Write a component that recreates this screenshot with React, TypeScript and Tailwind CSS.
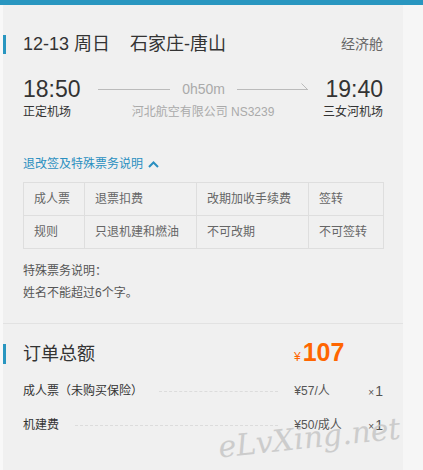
import React from 'react';

const rules = [
  ['成人票', '退票扣费', '改期加收手续费', '签转'],
  ['规则', '只退机建和燃油', '不可改期', '不可签转'],
];

const fees = [
  { name: '成人票（未购买保险）', price: '¥57/人', qty: '1' },
  { name: '机建费', price: '¥50/成人', qty: '1' },
];

export default function App() {
  return (
    <div className="relative h-[470px] w-[423px] overflow-hidden bg-[#f6f6f6] font-['Liberation_Sans','Noto_Sans_CJK_SC',sans-serif] text-[#333]">
      <div className="h-[5px] bg-[#2996c0]" />
      <div className="flex h-[465px]">
        <div className="w-[3px] shrink-0 bg-[#f8f8f8]" />
        <div className="w-[400px] shrink-0 bg-[#f0f0f0]">
          {/* flight */}
          <div className="pt-[30px]">
            <div className="flex h-[19px] items-center border-l-[3px] border-[#2996c0] pl-[17px] pr-[20px]">
              <span className="text-[18px] leading-[19px]">12-13</span>
              <span className="ml-[5px] text-[18px] leading-[19px]">周日</span>
              <span className="ml-[20px] text-[18px] leading-[19px]">石家庄-唐山</span>
              <span className="ml-auto text-[14px] leading-[19px] text-[#666]">经济舱</span>
            </div>

            <div className="mt-[23px] flex px-[20px]">
              <div className="w-[75px]">
                <div className="text-[23px] leading-[24px]">18:50</div>
                <div className="mt-[3px] text-[12px] leading-[16px]">正定机场</div>
              </div>
              <div className="flex-1">
                <div className="flex h-[24px] items-center">
                  <div className="h-px flex-1 bg-[#bbb]" />
                  <span className="mx-[12px] text-[14px] text-[#aaa]">0h50m</span>
                  <svg width="71" height="7" viewBox="0 0 71 7" className="shrink-0 translate-y-[-3px]">
                    <path d="M0 6.5H71M64.5 0.5L70.5 6.5" stroke="#bbb" strokeWidth="1" fill="none" />
                  </svg>
                </div>
                <div className="mt-[3px] text-center text-[12px] leading-[16px] text-[#aaa]">河北航空有限公司 NS3239</div>
              </div>
              <div className="w-[75px] text-right">
                <div className="text-[23px] leading-[24px]">19:40</div>
                <div className="mt-[3px] text-[12px] leading-[16px]">三女河机场</div>
              </div>
            </div>

            {/* rules */}
            <div className="px-[20px]">
              <div className="mt-[36px] flex h-[16px] items-center text-[12px] text-[#2a8fc0]">
                <span>退改签及特殊票务说明</span>
                <svg width="11" height="7" viewBox="0 0 11 7" className="ml-[5px]">
                  <path d="M1 6L5.5 1.5L10 6" stroke="#2a8fc0" strokeWidth="2" fill="none" />
                </svg>
              </div>
              <div className="mt-[10px] grid w-[361px] grid-cols-[61px_112px_112px_75px] border-l border-t border-[#dedede] text-[12px] text-[#666]">
                {rules.flat().map((c, i) => (
                  <div key={i} className="flex h-[33px] items-center border-b border-r border-[#dedede] pl-[10px]">
                    {c}
                  </div>
                ))}
              </div>
              <div className="mt-[11px] pb-[19px] text-[12px] leading-[22px] text-[#555]">
                <div>特殊票务说明：</div>
                <div>姓名不能超过6个字。</div>
              </div>
            </div>
          </div>

          <div className="h-px bg-[#e2e2e2]" />

          {/* total */}
          <div className="pt-[20px]">
            <div className="flex h-[20px] items-center border-l-[3px] border-[#2996c0] pl-[17px]">
              <span className="w-[271px] text-[18px] leading-[20px]">订单总额</span>
              <span className="flex items-baseline font-bold text-[#ff6600]">
                <span className="text-[12px] font-normal">¥</span>
                <span className="ml-[2px] text-[25px] leading-[20px]">107</span>
              </span>
            </div>
            <div className="mt-[10px] px-[20px]">
              {fees.map((f) => (
                <div key={f.name} className="flex h-[34px] items-center text-[12px]">
                  <span className="text-[#333]">{f.name}</span>
                  <span className="mx-[16px] flex-1 border-t border-dashed border-[#dcdcdc]" />
                  <span className="w-[74px] text-[#555]">{f.price}</span>
                  <span className="text-[#555]">
                    <span className="text-[10px]">×</span>
                    <span className="ml-[1px] text-[14px]">{f.qty}</span>
                  </span>
                </div>
              ))}
            </div>
          </div>
        </div>
      </div>

      <div className="pointer-events-none absolute left-[218px] top-[423px] rotate-[-6deg] font-['DejaVu_Serif',serif] text-[30px] italic leading-none text-[#c4c4c4] opacity-80">
        eLvXing.net
      </div>
    </div>
  );
}
